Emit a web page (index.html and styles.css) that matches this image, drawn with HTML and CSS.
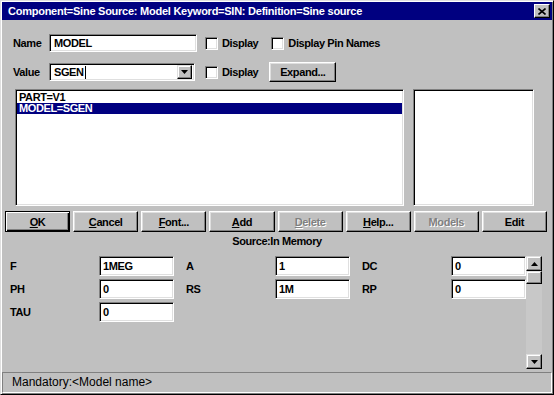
FILE: index.html
```html
<!DOCTYPE html>
<html lang="en">
<head>
<meta charset="UTF-8" />
<title>Component=Sine Source</title>
<link rel="stylesheet" href="styles.css">
</head>
<body>

<div class="window">
  <!-- Title bar -->
  <div class="titlebar">
    <span class="title-text">Component=Sine Source: Model Keyword=SIN: Definition=Sine source</span>
    <button class="close-btn" aria-label="Close">
      <svg viewBox="0 0 8 7" width="8" height="7"><path d="M0.5 0.5 L7.5 6.5 M7.5 0.5 L0.5 6.5" stroke="#000" stroke-width="1.6" fill="none"/></svg>
    </button>
  </div>

  <!-- Name row -->
  <div class="field-row row-name">
    <span class="field-label">Name</span>
    <div class="textbox name-box">MODEL</div>
    <label class="check check-first"><span class="check-box"></span>Display</label>
    <label class="check check-pins"><span class="check-box"></span>Display Pin Names</label>
  </div>

  <!-- Value row -->
  <div class="field-row row-value">
    <span class="field-label">Value</span>
    <div class="textbox combo">
      <span>SGEN</span><span class="caret"></span>
      <span class="combo-btn">
        <svg viewBox="0 0 7 4" width="7" height="4"><path d="M0 0h7l-3.5 4z" fill="#000"/></svg>
      </span>
    </div>
    <label class="check check-value"><span class="check-box"></span>Display</label>
    <button class="btn expand-btn">Expand...</button>
  </div>

  <!-- Attribute lists -->
  <div class="lists">
    <div class="listbox main-list">
      <div class="list-item">PART=V1</div>
      <div class="list-item selected">MODEL=SGEN</div>
    </div>
    <div class="listbox side-list"></div>
  </div>

  <!-- Command buttons -->
  <div class="button-row">
    <button class="btn default"><u>O</u>K</button>
    <button class="btn"><u>C</u>ancel</button>
    <button class="btn"><u>F</u>ont...</button>
    <button class="btn"><u>A</u>dd</button>
    <button class="btn" disabled><u>D</u>elete</button>
    <button class="btn"><u>H</u>elp...</button>
    <button class="btn" disabled>Models</button>
    <button class="btn">Edit</button>
  </div>

  <div class="source">Source:In Memory</div>

  <!-- Model parameters -->
  <div class="params">
    <div class="param-grid">
      <div class="param"><span class="param-label">F</span><div class="textbox param-box">1MEG</div></div>
      <div class="param"><span class="param-label">A</span><div class="textbox param-box">1</div></div>
      <div class="param"><span class="param-label">DC</span><div class="textbox param-box">0</div></div>
      <div class="param"><span class="param-label">PH</span><div class="textbox param-box">0</div></div>
      <div class="param"><span class="param-label">RS</span><div class="textbox param-box">1M</div></div>
      <div class="param"><span class="param-label">RP</span><div class="textbox param-box">0</div></div>
      <div class="param"><span class="param-label">TAU</span><div class="textbox param-box">0</div></div>
    </div>
    <div class="scrollbar">
      <span class="scroll-btn">
        <svg viewBox="0 0 7 4" width="7" height="4"><path d="M3.5 0l3.5 4h-7z" fill="#000"/></svg>
      </span>
      <span class="scroll-thumb"></span>
      <span class="scroll-track"></span>
      <span class="scroll-btn">
        <svg viewBox="0 0 7 4" width="7" height="4"><path d="M0 0h7l-3.5 4z" fill="#000"/></svg>
      </span>
    </div>
  </div>

  <!-- Status bar -->
  <div class="statusbar">Mandatory:&lt;Model name&gt;</div>
</div>

</body>
</html>
```

FILE: styles.css
```css
/* Base */
* {
  box-sizing: border-box;
}
body {
  margin: 0;
  font-family: "Liberation Sans", Arial, sans-serif;
  font-size: 11px;
  font-weight: bold;
  letter-spacing: -0.4px;
  color: #000;
  background-color: #c0c0c0;
  overflow: hidden;
}
/* Dialog frame */
.window {
  width: 554px;
  height: 395px;
  display: flex;
  flex-direction: column;
  padding: 1px;
  background-color: #c0c0c0;
  border: 1px solid;
  border-color: #dfdfdf #000 #000 #dfdfdf;
  box-shadow: inset 1px 1px #fff, inset -1px -1px #808080;
}
/* Title bar */
.titlebar {
  height: 18px;
  display: flex;
  align-items: center;
  justify-content: space-between;
  padding: 0 2px 0 6px;
  background-color: #000080;
  color: #fff;
}
.title-text {
  letter-spacing: -0.25px;
}
.close-btn {
  width: 16px;
  height: 14px;
  padding: 0;
  display: flex;
  align-items: center;
  justify-content: center;
  background-color: #c0c0c0;
  border: 1px solid;
  border-color: #fff #000 #000 #fff;
  box-shadow: inset -1px -1px #808080;
}
/* Shared bevels */
.textbox {
  height: 18px;
  background-color: #fff;
  border: 1px solid;
  border-color: #808080 #fff #fff #808080;
  box-shadow: inset 1px 1px #000, inset -1px -1px #dfdfdf;
  padding: 0 4px;
  line-height: 16px;
  white-space: nowrap;
}
.btn {
  font: inherit;
  letter-spacing: inherit;
  color: #000;
  background-color: #c0c0c0;
  border: 1px solid;
  border-color: #fff #000 #000 #fff;
  box-shadow: inset -1px -1px #808080, inset 1px 1px #dfdfdf;
  padding: 0;
}
.btn:disabled {
  color: #808080;
  text-shadow: 1px 1px #fff;
}
.btn u {
  text-underline-offset: 1px;
}
/* Name / value rows */
.field-row {
  display: flex;
  align-items: center;
  margin-left: 11px;
}
.row-name {
  margin-top: 14px;
  height: 18px;
}
.row-value {
  margin-top: 10px;
  height: 20px;
}
.field-label {
  width: 36px;
}
.name-box {
  width: 148px;
}
.combo {
  width: 146px;
  display: flex;
  align-items: center;
  padding-right: 2px;
}
.caret {
  width: 1px;
  height: 13px;
  margin-left: 1px;
  background-color: #000;
}
.combo-btn {
  margin-left: auto;
  width: 15px;
  height: 14px;
  display: flex;
  align-items: center;
  justify-content: center;
  background-color: #c0c0c0;
  border: 1px solid;
  border-color: #dfdfdf #000 #000 #dfdfdf;
  box-shadow: inset -1px -1px #808080, inset 1px 1px #fff;
}
.check {
  display: flex;
  align-items: center;
  gap: 4px;
}
.check-box {
  width: 13px;
  height: 13px;
  background-color: #fff;
  border: 1px solid;
  border-color: #808080 #fff #fff #808080;
  box-shadow: inset 1px 1px #000, inset -1px -1px #dfdfdf;
}
.check-first {
  margin-left: 8px;
}
.check-pins {
  margin-left: 13px;
}
.check-value {
  margin-left: 10px;
}
.expand-btn {
  margin-left: 11px;
  width: 67px;
  height: 20px;
}
/* List boxes */
.lists {
  display: flex;
  gap: 9px;
  margin: 7px 0 0 13px;
  height: 117px;
}
.listbox {
  background-color: #fff;
  border: 1px solid;
  border-color: #808080 #fff #fff #808080;
  box-shadow: inset 1px 1px #000, inset -1px -1px #dfdfdf;
  padding: 2px 1px;
}
.main-list {
  width: 389px;
}
.side-list {
  width: 121px;
}
.list-item {
  height: 11px;
  line-height: 11px;
  padding-left: 2px;
}
.list-item.selected {
  background-color: #000080;
  color: #fff;
}
/* Command buttons */
.button-row {
  display: flex;
  gap: 3px;
  margin: 5px 5px 0 3px;
  height: 21px;
}
.button-row .btn {
  flex: 1;
}
.btn.default {
  border-color: #000;
  box-shadow: inset 1px 1px #fff, inset -1px -1px #000, inset -2px -2px #808080;
}
.source {
  margin-top: 3px;
  text-align: center;
  line-height: 13px;
}
/* Parameters */
.params {
  display: flex;
  align-items: flex-start;
  margin: 8px 0 0 7px;
  height: 113px;
}
.param-grid {
  display: grid;
  grid-template-columns: repeat(3, auto);
  column-gap: 11px;
  row-gap: 3px;
}
.param {
  display: flex;
  align-items: center;
}
.param-label {
  width: 90px;
  padding-left: 1px;
}
.param-box {
  width: 75px;
  height: 20px;
  line-height: 18px;
  padding-left: 3px;
}
.scrollbar {
  width: 16px;
  height: 113px;
  display: flex;
  flex-direction: column;
}
.scroll-btn,
.scroll-thumb {
  height: 15px;
  display: flex;
  align-items: center;
  justify-content: center;
  background-color: #c0c0c0;
  border: 1px solid;
  border-color: #dfdfdf #000 #000 #dfdfdf;
  box-shadow: inset -1px -1px #808080, inset 1px 1px #fff;
}
.scroll-thumb {
  height: 13px;
}
.scroll-track {
  flex: 1;
  background-color: #c8c8c8;
}
/* Status bar */
.statusbar {
  margin-top: auto;
  height: 21px;
  border: 1px solid;
  border-color: #808080 #fff #fff #808080;
  padding-left: 9px;
  line-height: 19px;
  font-size: 12px;
  font-weight: normal;
  letter-spacing: 0;
}
```
